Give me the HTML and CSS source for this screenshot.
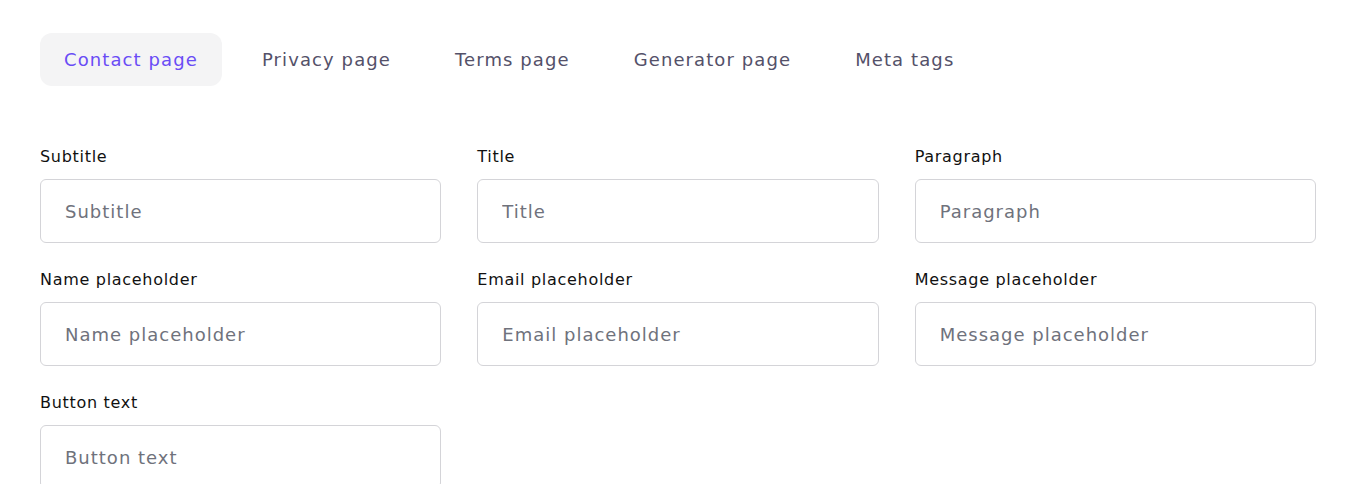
FILE: index.html
```html
<!DOCTYPE html>
<html lang="en">
<head>
<meta charset="utf-8">
<title>Settings</title>
<link rel="stylesheet" href="styles.css">
</head>
<body>
<div class="page">
  <nav class="tabs">
    <a class="tab active">Contact page</a>
    <a class="tab">Privacy page</a>
    <a class="tab">Terms page</a>
    <a class="tab">Generator page</a>
    <a class="tab">Meta tags</a>
  </nav>
  <form class="grid">
    <label class="field"><span class="label">Subtitle</span><input class="input" placeholder="Subtitle"></label>
    <label class="field"><span class="label">Title</span><input class="input" placeholder="Title"></label>
    <label class="field"><span class="label">Paragraph</span><input class="input" placeholder="Paragraph"></label>
    <label class="field"><span class="label">Name placeholder</span><input class="input" placeholder="Name placeholder"></label>
    <label class="field"><span class="label">Email placeholder</span><input class="input" placeholder="Email placeholder"></label>
    <label class="field"><span class="label">Message placeholder</span><input class="input" placeholder="Message placeholder"></label>
    <label class="field"><span class="label">Button text</span><input class="input" placeholder="Button text"></label>
  </form>
</div>
</body>
</html>
```
FILE: styles.css
```css
html, body {
  margin: 0;
  background: #ffffff;
}
body {
  font-family: "DejaVu Sans", Inter, sans-serif;
  overflow: hidden;
}
.page {
  padding: 33px 37px 0 40px;
}
.tabs {
  display: flex;
  gap: 16px;
}
.tab {
  display: flex;
  align-items: center;
  height: 53px;
  padding: 0 24px;
  border-radius: 12px;
  font-size: 18px;
  letter-spacing: 1.1px;
  color: #545169;
  white-space: nowrap;
}
.tab.active {
  background: #f4f4f5;
  color: #6a4cf5;
}
.grid {
  margin-top: 59px;
  display: grid;
  grid-template-columns: repeat(3, 1fr);
  column-gap: 36px;
  row-gap: 25px;
}
.field {
  display: flex;
  flex-direction: column;
  gap: 10px;
}
.label {
  font-size: 16px;
  line-height: 24px;
  letter-spacing: 0.7px;
  color: #111111;
}
.input {
  box-sizing: border-box;
  height: 64px;
  width: 100%;
  border: 1px solid #d4d4d8;
  border-radius: 6px;
  padding: 0 24px;
  font-family: inherit;
  font-size: 18px;
  letter-spacing: 1px;
  color: #161616;
  outline: none;
  background: #fff;
}
.input::placeholder {
  color: #6f727c;
}
```
